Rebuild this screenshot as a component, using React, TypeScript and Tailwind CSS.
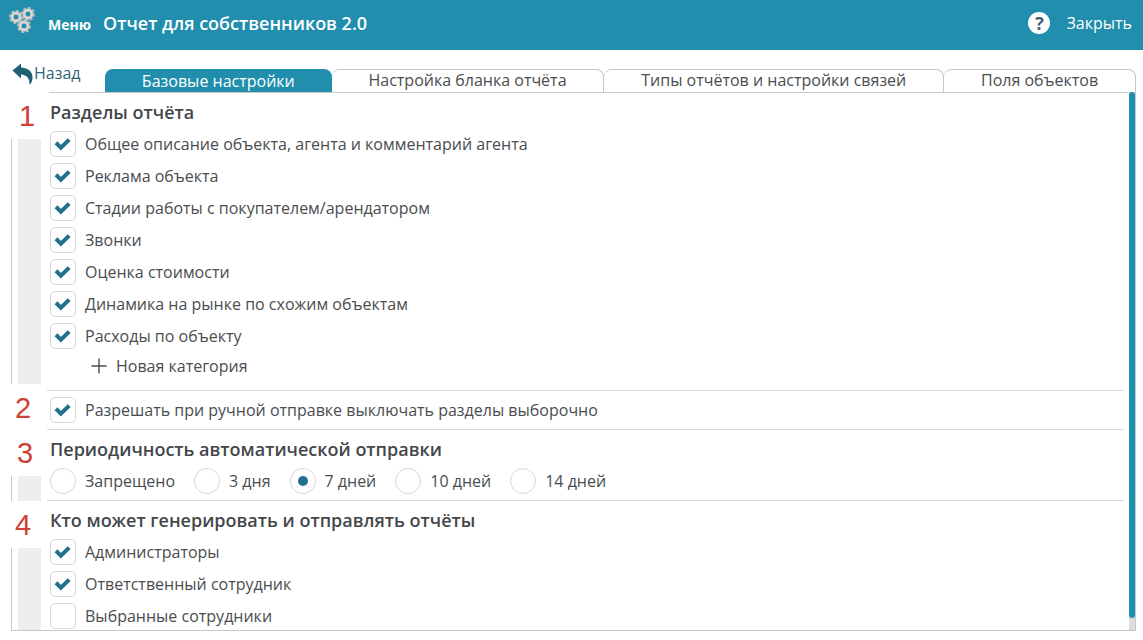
import { useState } from "react";
import type { ReactNode } from "react";

const sections = [
  "Общее описание объекта, агента и комментарий агента",
  "Реклама объекта",
  "Стадии работы с покупателем/арендатором",
  "Звонки",
  "Оценка стоимости",
  "Динамика на рынке по схожим объектам",
  "Расходы по объекту",
];

const periods = ["Запрещено", "3 дня", "7 дней", "10 дней", "14 дней"];

const senders = [
  { label: "Администраторы", checked: true },
  { label: "Ответственный сотрудник", checked: true },
  { label: "Выбранные сотрудники", checked: false },
];

const tabs = [
  "Базовые настройки",
  "Настройка бланка отчёта",
  "Типы отчётов и настройки связей",
  "Поля объектов",
];

const teeth = [0, 45, 90, 135, 180, 225, 270, 315];

function Gear({ x, y, r }: { x: number; y: number; r: number }) {
  return (
    <g transform={`translate(${x} ${y}) scale(${r / 7})`}>
      {teeth.map((a) => (
        <rect key={a} x="-1.6" y="-7" width="3.2" height="4" rx="0.8" fill="#b4bcbd" transform={`rotate(${a + 12})`} />
      ))}
      <circle r="3.9" fill="none" stroke="#b9bebe" strokeWidth="3.2" />
      <circle r="4" fill="none" stroke="#e2e2e0" strokeWidth="1.5" />
    </g>
  );
}

function Gears() {
  return (
    <svg viewBox="0 0 28 28" className="size-7" aria-hidden="true">
      <Gear x={8} y={11} r={7} />
      <Gear x={20} y={8} r={7} />
      <Gear x={16} y={20} r={7} />
    </svg>
  );
}

function Check({ label, defaultChecked }: { label: string; defaultChecked: boolean }) {
  return (
    <label className="flex w-fit items-center gap-[9px]">
      <span className="grid size-[26px]">
        <input
          type="checkbox"
          defaultChecked={defaultChecked}
          className="peer col-start-1 row-start-1 size-[26px] appearance-none rounded-[5px] border border-[#d8d8dc] bg-white"
        />
        <svg
          viewBox="0 0 26 26"
          className="pointer-events-none invisible col-start-1 row-start-1 size-[26px] peer-checked:visible"
          aria-hidden="true"
        >
          <path d="M6 11.8 10.9 16.6 19.2 8.6" fill="none" stroke="#22718c" strokeWidth="4" />
        </svg>
      </span>
      {label}
    </label>
  );
}

function Section({ n, mark, bar, children }: { n: number; mark: string; bar?: string; children: ReactNode }) {
  return (
    <section className="flex">
      <div className="flex w-9 shrink-0 flex-col">
        <div className={`flex font-['Liberation_Sans',sans-serif] text-[29px] leading-8 text-[#cd4034] ${mark}`}>{n}</div>
        {bar && (
          <div className={`flex flex-1 border-l border-[#c8c8c8] pl-1.5 ${bar}`}>
            <div className="w-[23px] bg-[#eeeeee]" />
          </div>
        )}
      </div>
      <div className="min-w-0 flex-1">{children}</div>
    </section>
  );
}

const heading = "pl-[3px] text-lg leading-6 font-semibold text-[#43474b]";

export default function App() {
  const [tab, setTab] = useState(0);
  return (
    <div className="flex h-screen flex-col bg-white pb-[9px] font-['Open_Sans',sans-serif] text-base leading-6 text-[#4a4d50]">
      <header className="flex h-[50px] shrink-0 items-center bg-[#208eac] pr-[11px] pb-1 pl-2 text-white">
        <button type="button" className="flex items-center gap-3 text-sm font-bold">
          <span className="pb-1.5">
            <Gears />
          </span>
          <span className="pt-1">Меню</span>
        </button>
        <h1 className="flex-1 pl-3 text-lg font-semibold">Отчет для собственников 2.0</h1>
        <button
          type="button"
          aria-label="Справка"
          className="flex size-[22px] items-center justify-center rounded-full bg-white text-lg leading-none font-bold text-[#44616b]"
        >
          ?
        </button>
        <button type="button" className="pl-4">
          Закрыть
        </button>
      </header>

      <div className="flex shrink-0 items-end pt-2 pr-[7px] pl-3">
        <a href="#back" className="flex w-[93px] items-center self-start pt-[3px] text-[#2f6478]">
          <svg viewBox="0 0 22 24" className="h-6 w-[22px]" aria-hidden="true">
            <path d="M0.5 9.5 9 2.5V6.5C16 6.8 21 11 20.5 17C20.3 20 19.5 22 17.5 24C18 18 15 13.8 9 13.5V17.5Z" fill="#1f6173" />
          </svg>
          Назад
        </a>
        <nav role="tablist" className="mt-[11px] flex flex-1">
          {tabs.map((t, i) => (
            <button
              key={t}
              type="button"
              role="tab"
              aria-selected={i === tab}
              onClick={() => setTab(i)}
              className={
                i === tab
                  ? "h-[23px] flex-auto rounded-t-lg bg-[#208eac] text-white"
                  : "h-[23px] flex-auto rounded-t-lg border-t border-r border-[#c8c8c8] pb-0.5 leading-5"
              }
            >
              {t}
            </button>
          ))}
        </nav>
      </div>

      <main className="mr-[7px] ml-[11px] flex min-h-0 flex-1 border-r border-b border-[#c8c8c8]">
        <form className="min-w-0 flex-1 overflow-hidden">
          <Section n={1} mark="h-[47px] pt-2 pl-2" bar="mb-1.5">
            <div className="ml-0.5 border-t border-[#c8c8c8]" />
            <div className="pt-[7px] pb-3">
              <h2 className={heading}>Разделы отчёта</h2>
              <div className="flex flex-col gap-1.5 pt-[7px] pl-[3px]">
                {sections.map((s) => (
                  <Check key={s} label={s} defaultChecked />
                ))}
              </div>
              <button type="button" className="mt-[5px] ml-11 flex items-center gap-[9px]">
                <svg viewBox="0 0 16 16" className="size-4" aria-hidden="true">
                  <path d="M8 0.5V15.5M0.5 8H15.5" stroke="#4a4d50" strokeWidth="1.4" />
                </svg>
                Новая категория
              </button>
            </div>
          </Section>
          <Section n={2} mark="pt-0.5 pl-1">
            <div className="mr-[5px] border-y border-[#d8d8dc] py-1.5 pl-[3px]">
              <Check label="Разрешать при ручной отправке выключать разделы выборочно" defaultChecked />
            </div>
          </Section>
          <Section n={3} mark="h-[46px] pt-[7px] pl-1.5" bar="mb-0">
            <div className="mr-[5px] border-b border-[#d8d8dc] pt-[7px] pb-1.5">
              <h2 className={heading}>Периодичность автоматической отправки</h2>
              <div className="flex gap-[19px] pt-[7px] pl-[3px]">
                {periods.map((p) => (
                  <label key={p} className="flex items-center gap-[9px]">
                    <span className="grid size-[26px] place-items-center">
                      <input
                        type="radio"
                        name="period"
                        defaultChecked={p === "7 дней"}
                        className="peer col-start-1 row-start-1 size-[26px] appearance-none rounded-full border border-[#d8d8dc] bg-white"
                      />
                      <span className="pointer-events-none invisible col-start-1 row-start-1 size-2.5 rounded-full bg-[#22718c] peer-checked:visible" />
                    </span>
                    {p}
                  </label>
                ))}
              </div>
            </div>
          </Section>
          <Section n={4} mark="h-[47px] pt-2 pl-1" bar="mb-0">
            <div className="pt-[7px] pb-0.5">
              <h2 className={heading}>Кто может генерировать и отправлять отчёты</h2>
              <div className="flex flex-col gap-1.5 pt-[7px] pl-[3px]">
                {senders.map((s) => (
                  <Check key={s.label} label={s.label} defaultChecked={s.checked} />
                ))}
              </div>
            </div>
          </Section>
        </form>
        <div className="flex w-1.5 shrink-0 flex-col bg-[#dcdce0]">
          <div className="mb-3 flex-1 rounded-full bg-[#208eac]" />
        </div>
      </main>
    </div>
  );
}
